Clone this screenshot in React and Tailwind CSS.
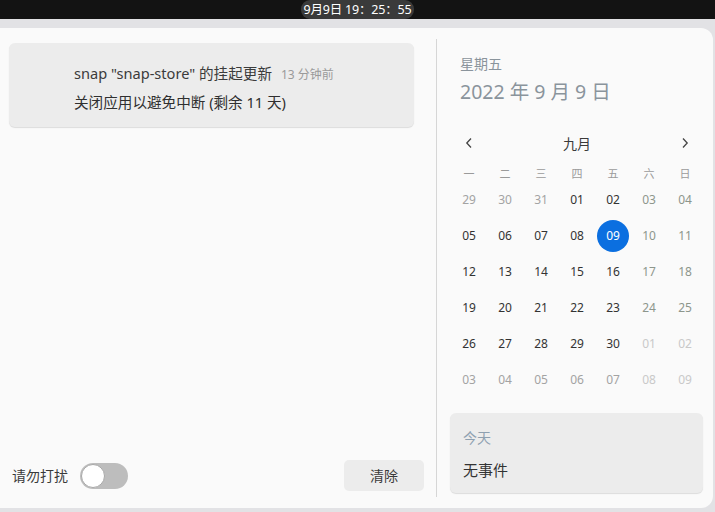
import React from "react";

const font = { fontFamily: '"Noto Sans", "Noto Sans CJK SC", sans-serif' };

const weekdays = ["一", "二", "三", "四", "五", "六", "日"];

const rows = [
  ["29", "30", "31", "01", "02", "03", "04"],
  ["05", "06", "07", "08", "09", "10", "11"],
  ["12", "13", "14", "15", "16", "17", "18"],
  ["19", "20", "21", "22", "23", "24", "25"],
  ["26", "27", "28", "29", "30", "01", "02"],
  ["03", "04", "05", "06", "07", "08", "09"],
];

function dayClass(r, c) {
  const other = (r === 0 && c < 3) || (r === 4 && c > 4) || r === 5;
  const weekend = c > 4;
  if (r === 1 && c === 4) return "bg-[#0b6fe0] text-white rounded-full";
  if (other && weekend) return "text-[#c9c9c9]";
  if (other) return "text-[#a3a3a3]";
  if (weekend) return "text-[#8d968c]";
  return "text-[#333333]";
}

function Chevron({ dir }) {
  return (
    <svg width="8" height="12" viewBox="0 0 8 12" fill="none">
      <path
        d={dir === "left" ? "M6 1.5 L1.8 6 L6 10.5" : "M2 1.5 L6.2 6 L2 10.5"}
        stroke="#444"
        strokeWidth="1.3"
      />
    </svg>
  );
}

export default function App() {
  return (
    <div style={font} className="w-[715px] h-[512px] bg-[#e2e2e5] overflow-hidden">
      <div className="h-[19px] bg-[#131313] flex justify-center">
        <div className="w-[113px] h-[19px] rounded-[9px] bg-[#3a3a3a] text-white text-[12.5px] leading-[19px] text-center whitespace-nowrap tracking-[-0.2px]">
          9月9日 19：25：55
        </div>
      </div>

      <div className="mt-[9px] w-[713px] h-[480px] bg-[#fafafa] rounded-r-[12px] flex">
        {/* left: notifications */}
        <div className="w-[436px] flex flex-col">
          <div className="mt-[15px] ml-[9px] w-[405px] h-[84px] bg-[#ececec] rounded-[6px] shadow-[0_1px_1px_rgba(0,0,0,0.12)] pl-[65px] pt-[20px]">
            <div className="flex items-baseline leading-[20px] whitespace-nowrap">
              <span className="text-[14.6px] text-[#3b3b3b]">snap "snap-store" 的挂起更新</span>
              <span className="ml-[9px] text-[12px] text-[#9a9a9a]">13 分钟前</span>
            </div>
            <div className="mt-[7px] text-[14.6px] leading-[20px] text-[#2f2f2f] whitespace-nowrap">
              关闭应用以避免中断 (剩余 11 天)
            </div>
          </div>

          <div className="flex-1" />

          <div className="flex items-center justify-between pl-[12px] pr-[12px] pb-[17px]">
            <div className="flex items-center">
              <span className="text-[14px] text-[#3a3a3a]">请勿打扰</span>
              <div className="ml-[12px] w-[48px] h-[26px] rounded-full bg-[#bdbdbd] flex items-center pl-[1px]">
                <div className="w-[24px] h-[24px] rounded-full bg-white border border-[#a8a8a8]" />
              </div>
            </div>
            <div className="w-[80px] h-[31px] rounded-[5px] bg-[#ececec] flex items-center justify-center text-[14px] text-[#3a3a3a]">
              清除
            </div>
          </div>
        </div>

        {/* divider */}
        <div className="w-px bg-[#d6d6d6] mt-[11px] h-[458px]" />

        {/* right: calendar */}
        <div className="flex-1 flex flex-col pl-[14px]">
          <div className="pt-[26px] pl-[9px] text-[14px] leading-[20px] text-[#8a949c]">星期五</div>
          <div className="mt-[4px] pl-[9px] text-[19.5px] leading-[28px] text-[#8a949c] whitespace-nowrap">2022 年 9 月 9 日</div>

          <div className="mt-[19px] w-[252px] h-[36px] grid grid-cols-7 items-center">
            <div className="flex justify-center">
              <Chevron dir="left" />
            </div>
            <div className="col-span-5 text-center text-[14px] text-[#3a3a3a]">九月</div>
            <div className="flex justify-center">
              <Chevron dir="right" />
            </div>
          </div>

          <div className="w-[252px] h-[21px] grid grid-cols-7 pt-[5px]">
            {weekdays.map((w) => (
              <div key={w} className="text-center text-[11px] leading-[16px] text-[#9a9a9a]">
                {w}
              </div>
            ))}
          </div>

          <div className="w-[252px] grid grid-cols-7">
            {rows.map((row, r) =>
              row.map((d, c) => (
                <div key={r + "-" + c} className="h-[36px] flex items-center justify-center">
                  <div
                    className={
                      "w-[32px] h-[32px] flex items-center justify-center text-[12px] " +
                      dayClass(r, c)
                    }
                  >
                    {d}
                  </div>
                </div>
              ))
            )}
          </div>

          <div className="mt-[15px] w-[253px] -ml-px h-[80px] bg-[#ececec] rounded-[6px] shadow-[0_1px_1px_rgba(0,0,0,0.12)] pl-[13px] pt-[15px]">
            <div className="text-[14px] leading-[20px] text-[#8ea0b0]">今天</div>
            <div className="mt-[12px] text-[15px] leading-[20px] text-[#333333]">无事件</div>
          </div>
        </div>
      </div>
    </div>
  );
}
